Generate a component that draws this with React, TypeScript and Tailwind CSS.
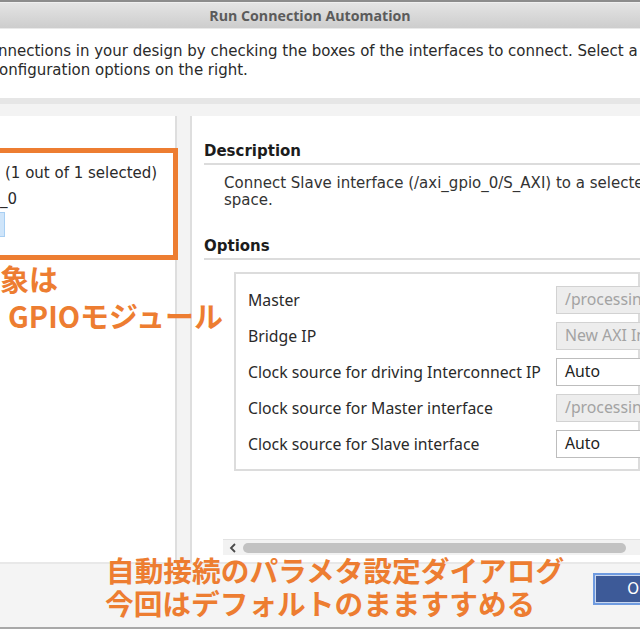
import React from "react";

const rows = [
  { label: "Master", value: "/processin", disabled: true },
  { label: "Bridge IP", value: "New AXI In", disabled: true },
  { label: "Clock source for driving Interconnect IP", value: "Auto", disabled: false },
  { label: "Clock source for Master interface", value: "/processin", disabled: true },
  { label: "Clock source for Slave interface", value: "Auto", disabled: false },
];

export default function App() {
  return (
    <div
      className="relative w-[640px] h-[640px] overflow-hidden bg-white flex flex-col text-[15px] text-[#2a2a2a]"
      style={{ fontFamily: '"DejaVu Sans", sans-serif' }}
    >
      <div className="h-[2px] bg-[#8c8c8c] shrink-0" />
      <div className="h-[26px] shrink-0 bg-gradient-to-b from-[#e4e4e4] to-[#cdcdcd] border-t border-[#efefef] flex items-center justify-center pr-[20px]">
        <span className="font-bold text-[14.2px] text-[#5b5b5b]" style={{ fontFamily: '"Open Sans", sans-serif' }}>
          Run Connection Automation
        </span>
      </div>
      <div className="h-[1px] bg-[#e9e9e9] shrink-0" />
      <div className="h-[69px] shrink-0 bg-white pt-[13px] leading-[19px] whitespace-nowrap">
        <div className="ml-[-2px]">nnections in your design by checking the boxes of the interfaces to connect. Select a</div>
        <div className="ml-[-1px]">onfiguration options on the right.</div>
      </div>
      <div className="h-[6px] bg-[#e6e6e6] shrink-0" />
      <div className="flex-1 bg-[#f3f3f3] flex flex-col">
        <div className="flex gap-[13px] pt-[12px] h-[458px]">
          <div className="w-[177px] shrink-0 bg-white border-r-2 border-[#dedede] pt-[44px] leading-[26px] whitespace-nowrap overflow-hidden">
            <div className="pl-[5px]">(1 out of 1 selected)</div>
            <div>_0</div>
            <div className="w-[5px] h-[25px] bg-[#cfe5fa] border-y border-r border-[#a8cff3]" />
          </div>
          <div className="flex-1 bg-white border-l-2 border-[#dedede] flex flex-col pl-[12px] pt-[26px] whitespace-nowrap overflow-hidden">
            <div className="font-bold leading-[18px] text-[#1c1c1c]">Description</div>
            <div className="h-[2px] bg-[#dcdcdc] mt-[3px]" />
            <div className="pl-[20px] pt-[10px] leading-[17px] text-[#333]">
              <div>Connect Slave interface (/axi_gpio_0/S_AXI) to a selected address</div>
              <div>space.</div>
            </div>
            <div className="font-bold leading-[18px] text-[#1c1c1c] mt-[28px]">Options</div>
            <div className="h-[2px] bg-[#dcdcdc] mt-[3px]" />
            <div className="ml-[30px] mt-[12px] h-[199px] border-2 border-[#dcdcdc] bg-white pl-[12px] pt-[12px]">
              <div className="flex flex-col gap-[8px]" style={{ fontFamily: '"Noto Sans", sans-serif' }}>
                {rows.map((r) => (
                  <div key={r.label} className="flex items-center h-[28px]">
                    <div className="w-[308px] shrink-0 text-[#2a2a2a] text-[15.8px] leading-[20px]">{r.label}</div>
                    <div
                      className={
                        r.disabled
                          ? "w-[200px] h-[28px] shrink-0 bg-[#ededed] border border-[#d2d2d2] flex items-center pl-[8px] text-[#a3a3a3] text-[15.8px]"
                          : "w-[200px] h-[28px] shrink-0 bg-white border border-[#bdbdbd] flex items-center pl-[8px] text-[#222] text-[15.8px]"
                      }
                    >
                      {r.value}
                    </div>
                  </div>
                ))}
              </div>
            </div>
            <div className="flex-1" />
            <div className="ml-[19px] h-[16px] bg-[#f2f2f2] border-t border-[#e2e2e2] flex items-center mb-[7px]">
              <svg width="10" height="12" viewBox="0 0 10 12" className="ml-[5px]">
                <path d="M7 2 L3 6 L7 10" fill="none" stroke="#4a4a4a" strokeWidth="1.8" />
              </svg>
              <div className="ml-[5px] h-[10px] w-[383px] rounded-full bg-[#c2c2c2]" />
            </div>
          </div>
        </div>
        <div className="flex-1 border-t-2 border-[#e8e8e8] bg-[#f4f4f4] flex justify-end items-start pt-[9px]">
          <div className="w-[90px] h-[32px] mr-[-43px] border-2 border-[#6f9be0] bg-[#3d5a98] flex items-center justify-center shadow-[inset_0_0_0_1px_#c9d7ef]">
            <span className="text-white text-[15px]">OK</span>
          </div>
        </div>
        <div className="h-[2px] bg-[#a8a8a8] shrink-0" />
        <div className="h-[11px] bg-white shrink-0" />
      </div>

      <div className="absolute left-[-10px] top-[148px] w-[188px] h-[112px] border-[5px] border-[#ed7d31]" />
      <div
        className="absolute left-0 top-[260px] text-[#ed7d31] font-bold text-[29px] leading-[37px] whitespace-nowrap"
        style={{ fontFamily: '"Noto Sans CJK JP", sans-serif' }}
      >
        <div className="ml-[-29px]">対象は</div>
        <div className="ml-[8px]">GPIOモジュール</div>
      </div>
      <div
        className="absolute left-[106px] top-[553px] text-[#ed7d31] font-bold text-[28.7px] leading-[33px] whitespace-nowrap"
        style={{ fontFamily: '"Noto Sans CJK JP", sans-serif' }}
      >
        <div>自動接続のパラメタ設定ダイアログ</div>
        <div className="ml-[-1px]">今回はデフォルトのまますすめる</div>
      </div>
    </div>
  );
}
